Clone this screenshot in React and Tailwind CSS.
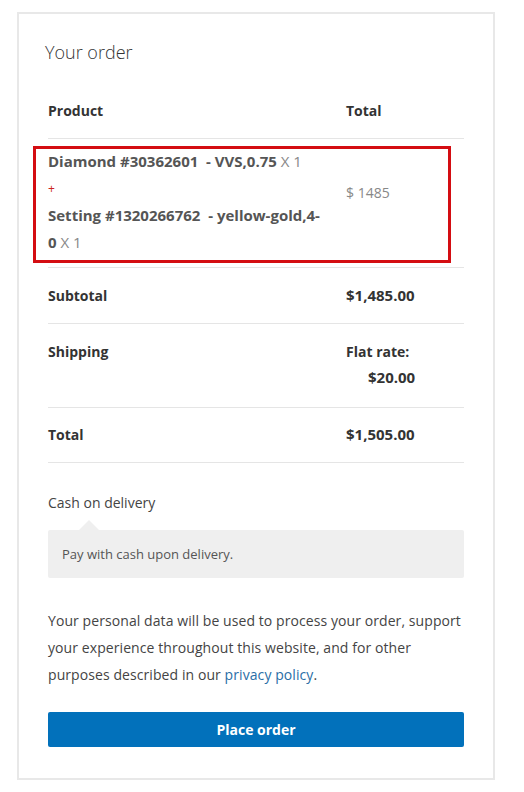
import React from 'react';

const font = { fontFamily: '"Open Sans", "Noto Sans", sans-serif' };

function Row({ label, children, className = '' }) {
  return (
    <div className={`grid grid-cols-[298px_1fr] border-b border-[#e5e5e5] ${className}`}>
      <div className="font-bold text-[#333]">{label}</div>
      <div className="text-[15px] font-bold text-[#333]">{children}</div>
    </div>
  );
}

export default function App() {
  return (
    <div className="min-h-screen bg-white pt-[12px] pl-[17px]" style={font}>
      <div className="w-[478px] border-2 border-[#e8e8e8] pt-[26px] pb-[31px]">
        <h3 className="pl-[26px] text-[18px] font-light leading-[24px] text-[#333]">Your order</h3>

        <div className="mx-[29px] mt-[20px] text-[14px]">
          {/* header */}
          <div className="grid h-[55px] grid-cols-[298px_1fr] items-center border-b border-[#e5e5e5] pb-[1px] font-bold text-[#333]">
            <div>Product</div>
            <div>Total</div>
          </div>

          {/* product */}
          <div className="relative grid h-[129px] grid-cols-[298px_1fr] border-b border-[#e5e5e5]">
            <div className="pt-[9px] text-[15px] leading-[27px] text-[#555]">
              <div>
                <span className="font-bold">Diamond #30362601&nbsp; - VVS,0.75</span>{' '}
                <span className="font-normal text-[#888]">X 1</span>
              </div>
              <div className="text-[12px] text-[#c22]">+</div>
              <div className="font-bold">Setting #1320266762&nbsp; - yellow-gold,4-</div>
              <div>
                <span className="font-bold">0</span> <span className="text-[#888]">X 1</span>
              </div>
            </div>
            <div className="pt-[40px] leading-[27px] text-[#888]">$ 1485</div>
            <div className="pointer-events-none absolute left-[-15px] top-[7px] h-[117px] w-[418px] border-[3px] border-[#d40d12]" />
          </div>

          <Row label="Subtotal" className="h-[56px] items-center">$1,485.00</Row>

          <div className="grid h-[84px] grid-cols-[298px_1fr] border-b border-[#e5e5e5] pt-[14px] font-bold leading-[27px] text-[#333]">
            <div>Shipping</div>
            <div>
              <div>Flat rate:</div>
              <div className="mt-[-1px] pl-[22px] text-[15px]">$20.00</div>
            </div>
          </div>

          <Row label="Total" className="h-[55px] items-center pb-[1px]">$1,505.00</Row>

          <div className="mt-[28px] text-[14px] leading-[24px] text-[#444]">Cash on delivery</div>
          <div className="ml-[31px] mt-[5px] h-0 w-0 border-x-[10px] border-b-[10px] border-x-transparent border-b-[#efefef]" />
          <div className="rounded-[2px] bg-[#efefef] px-[14px] py-[13px] text-[13px] leading-[22px] text-[#555]">
            Pay with cash upon delivery.
          </div>

          <p className="mt-[29px] text-[14px] leading-[27px] tracking-[0.08px] text-[#444]">
            Your personal data will be used to process your order, support your experience throughout this website, and
            for other purposes described in our <a className="text-[#2a6ea6]">privacy policy</a>.
          </p>

          <button className="mt-[24px] h-[35px] w-full rounded-[2px] bg-[#0271bb] text-[14px] font-bold text-white">
            Place order
          </button>
        </div>
      </div>
    </div>
  );
}
